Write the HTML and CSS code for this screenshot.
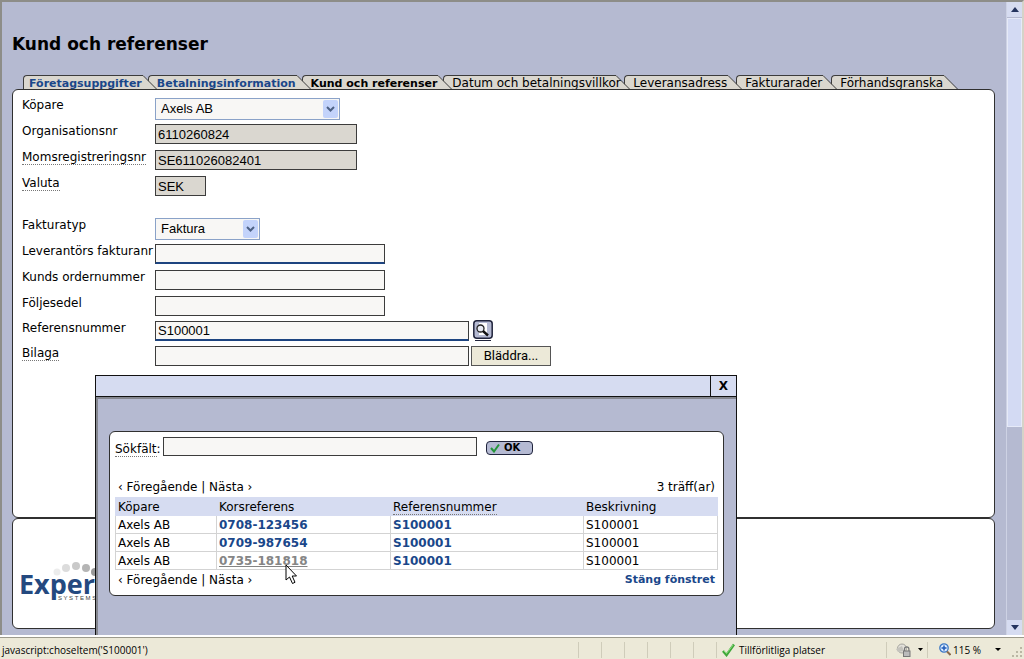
FILE: index.html
```html
<!DOCTYPE html>
<html lang="sv">
<head>
<meta charset="utf-8">
<title>Kund och referenser</title>
<link rel="stylesheet" href="styles.css">
</head>
<body>
<div class="viewport">
  <div class="page">
    <h1 class="title">Kund och referenser</h1>
    <nav>
      <ul class="tabs">
        <li class="tab tab-link"><a href="#"><span>Företagsuppgifter</span></a><svg class="tab-end" width="15" height="15"><path class="fill" d="M0 0H1L15 15H0Z"/><path class="edge" d="M0 .5H1L15 14.5"/></svg></li>
        <li class="tab tab-link"><a href="#"><span>Betalningsinformation</span></a><svg class="tab-end" width="15" height="15"><path class="fill" d="M0 0H1L15 15H0Z"/><path class="edge" d="M0 .5H1L15 14.5"/></svg></li>
        <li class="tab tab-current"><a href="#"><span>Kund och referenser</span></a><svg class="tab-end" width="15" height="15"><path class="fill" d="M0 0H1L15 15H0Z"/><path class="edge" d="M0 .5H1L15 14.5"/></svg></li>
        <li class="tab tab-terms"><a href="#"><span>Datum och betalningsvillkor</span></a><svg class="tab-end" width="15" height="15"><path class="fill" d="M0 0H1L15 15H0Z"/><path class="edge" d="M0 .5H1L15 14.5"/></svg></li>
        <li class="tab"><a href="#"><span>Leveransadress</span></a><svg class="tab-end" width="15" height="15"><path class="fill" d="M0 0H1L15 15H0Z"/><path class="edge" d="M0 .5H1L15 14.5"/></svg></li>
        <li class="tab"><a href="#"><span>Fakturarader</span></a><svg class="tab-end" width="15" height="15"><path class="fill" d="M0 0H1L15 15H0Z"/><path class="edge" d="M0 .5H1L15 14.5"/></svg></li>
        <li class="tab"><a href="#"><span>Förhandsgranska</span></a><svg class="tab-end" width="15" height="15"><path class="fill" d="M0 0H1L15 15H0Z"/><path class="edge" d="M0 .5H1L15 14.5"/></svg></li>
      </ul>
    </nav>

    <main class="panel form-panel">
      <form class="form">
        <div class="row"><label for="buyer">Köpare</label>
          <span class="select-box w-buyer"><select id="buyer"><option>Axels AB</option></select><svg class="arrow" width="15" height="18" viewBox="0 0 15 18"><path d="M4 7L7.500 10.500L11 7"/></svg></span></div>
        <div class="row"><label for="org">Organisationsnr</label><input class="field w-org" id="org" value="6110260824" readonly></div>
        <div class="row"><label for="vat"><span class="hint">Momsregistreringsnr</span></label><input class="field w-org" id="vat" value="SE611026082401" readonly></div>
        <div class="row"><label for="cur"><span class="hint">Valuta</span></label><input class="field w-cur" id="cur" value="SEK" readonly></div>
        <div class="row group"><label for="type">Fakturatyp</label>
          <span class="select-box w-type"><select id="type"><option>Faktura</option></select><svg class="arrow" width="15" height="18" viewBox="0 0 15 18"><path d="M4 7L7.500 10.500L11 7"/></svg></span></div>
        <div class="row"><label for="inv">Leverantörs fakturanr</label><input class="field w-mid required" id="inv"></div>
        <div class="row"><label for="ord">Kunds ordernummer</label><input class="field w-mid" id="ord"></div>
        <div class="row tight"><label for="slip">Följesedel</label><input class="field w-mid" id="slip"></div>
        <div class="row tight"><label for="ref">Referensnummer</label><input class="field w-long required" id="ref" value="S100001">
          <button class="lookup" type="button" aria-label="Sök"><svg width="20" height="21" viewBox="0 0 20 21"><rect x=".8" y=".8" width="18.400" height="17.400" rx="3" fill="#b5bad3" stroke="#20243c" stroke-width="1.500"/><path d="M6 3h8v12H6z" fill="#fff"/><circle cx="7.500" cy="8.500" r="3.500" fill="#e8ebf4" stroke="#222" stroke-width="1.300"/><path d="M10 11L15 15.500" stroke="#111" stroke-width="2.400"/><path d="M2 20.500H18" stroke="#20243c"/></svg></button></div>
        <div class="row"><label for="att"><span class="hint">Bilaga</span></label><input class="field w-long" id="att"><button class="browse" type="button">Bläddra...</button></div>
      </form>
    </main>

    <footer class="panel brand">
      <svg width="130" height="50" viewBox="0 0 130 50" role="img" aria-label="Expert Systems">
        <g><circle cx="36" cy="11" r="3.500" fill="#ececec"/><circle cx="45" cy="7" r="4" fill="#dcdcdc"/><circle cx="55" cy="5" r="4" fill="#c9c9c9"/><circle cx="65" cy="7" r="4" fill="#b5b5b5"/><circle cx="74" cy="11" r="4" fill="#999"/></g>
        <text class="logo-name" x="-2" y="33">Expert</text>
        <text class="logo-sub" x="37" y="39">S Y S T E M S</text>
      </svg>
    </footer>

    <section class="dialog" role="dialog" aria-label="Sök referens">
      <header class="dialog-bar"><button class="close" type="button">X</button></header>
      <div class="dialog-body">
        <div class="panel result-panel">
          <div class="search"><label for="q"><span class="hint">Sökfält</span>:</label><input class="field" id="q">
            <button class="ok" type="button"><svg width="10" height="10" viewBox="0 0 10 10"><path d="M1 5L4 8.500L9 1.500" fill="none" stroke="#24963a" stroke-width="2"/></svg>OK</button></div>
          <div class="pager"><span>‹ Föregående | Nästa ›</span><span>3 träff(ar)</span></div>
          <table class="results">
            <colgroup><col class="c1"><col class="c2"><col class="c3"><col class="c4"></colgroup>
            <thead><tr><th>Köpare</th><th>Korsreferens</th><th><span class="hint">Referensnummer</span></th><th>Beskrivning</th></tr></thead>
            <tbody>
              <tr><td>Axels AB</td><td><a href="#">0708-123456</a></td><td><a href="#">S100001</a></td><td>S100001</td></tr>
              <tr><td>Axels AB</td><td><a href="#">0709-987654</a></td><td><a href="#">S100001</a></td><td>S100001</td></tr>
              <tr><td>Axels AB</td><td><a class="hovered" href="#">0735-181818</a></td><td><a href="#">S100001</a></td><td>S100001</td></tr>
            </tbody>
          </table>
          <div class="pager bottom"><span>‹ Föregående | Nästa ›</span><a href="#">Stäng fönstret</a></div>
        </div>
      </div>
      <svg class="cursor" width="13" height="21" viewBox="0 0 13 21"><path d="M1 1V16L4.500 13L7.500 19.500L10 18.300L7.200 12H11.500Z" fill="#fff" stroke="#000"/></svg>
    </section>
  </div>

  <div class="scroll" aria-hidden="true">
    <span class="scroll-btn"><svg width="8" height="5"><path d="M0 5L4 0L8 5Z"/></svg></span>
    <span class="thumb"></span>
    <span class="scroll-btn down"><svg width="8" height="5"><path d="M0 0H8L4 5Z"/></svg></span>
  </div>
</div>

<div class="status">
  <span class="status-text">javascript:choseItem('S100001')</span>
  <span class="cell"></span><span class="cell"></span><span class="cell"></span><span class="cell"></span><span class="cell"></span><span class="cell"></span>
  <span class="zone"><svg width="13" height="14" viewBox="0 0 13 14"><path d="M1 8L4.500 12L12 1.500" fill="none" stroke="#3fa83a" stroke-width="2.600"/><path d="M1.500 7.500L4.500 10.500L11 2" fill="none" stroke="#8fdc80"/></svg>Tillförlitliga platser</span>
  <span class="privacy"><svg width="15" height="14" viewBox="0 0 15 14"><circle cx="6" cy="5.500" r="4.500" fill="#e3e1da" stroke="#a5a49e"/><path d="M0 6L6 3L8 8L2 9Z" fill="#c4c3bd"/><path d="M8.500 8V6a2.200 2.200 0 0 1 4.400 0V8" fill="none" stroke="#777" stroke-width="1.200"/><rect x="7.500" y="8" width="6.500" height="5.500" fill="#bbb" stroke="#777"/></svg><svg class="drop" width="5" height="3"><path d="M0 0H5L2.500 3Z"/></svg></span>
  <span class="zoom"><svg width="12" height="13" viewBox="0 0 12 13"><circle cx="5" cy="5" r="4.200" fill="#dcebff" stroke="#3c78c4" stroke-width="1.300"/><path d="M5 2.500V7.500M2.500 5H7.500" stroke="#1e5bb8" stroke-width="1.500"/><path d="M8 8.500L11.500 12" stroke="#8a6a4c" stroke-width="2"/></svg><span>115 %</span><svg class="drop" width="6" height="3"><path d="M0 0H6L3 3Z"/></svg></span>
  <svg class="grip" width="12" height="12" fill="#bab7a4"><path d="M8 0h2v2H8zM4 4h2v2H4zM8 4h2v2H8zM0 8h2v2H0zM4 8h2v2H4zM8 8h2v2H8z"/></svg>
</div>
</body>
</html>
```
FILE: styles.css
```css
* { box-sizing: border-box; }
body {
  margin: 0;
  height: 100vh;
  display: flex;
  flex-direction: column;
  overflow: hidden;
  background: #ece9d8;
  color: #000;
  font: 12px/16px "DejaVu Sans", Verdana, sans-serif;
}
button, input, select { font: inherit; color: inherit; margin: 0; }
a { color: inherit; text-decoration: none; }

.viewport {
  flex: 1;
  min-height: 0;
  display: flex;
  overflow: hidden;
  background: #b5bad1;
  border-top: 2px solid #8d8d88;
  border-left: 2px solid #8d8d88;
  border-right: 2px solid #d5d3c8;
}
.page {
  position: relative;
  flex: 1;
  display: flex;
  flex-direction: column;
  padding: 32px 11px 6px 10px;
}
.title { margin: 0 0 20px; font-size: 17px; line-height: 21px; }

.tabs {
  display: flex;
  list-style: none;
  margin: 0;
  padding: 0 0 0 11px;
  height: 14px;
  overflow: hidden;
}
.tab { display: flex; }
.tab + .tab { margin-left: -6px; }
.tab-link + .tab, .tab-current + .tab { margin-left: -9px; }
.tab a {
  background: #dad7cf;
  border: solid #3c3c3c;
  border-width: 1px 0 0 1px;
  border-top-left-radius: 4px;
  padding-left: 8px;
  line-height: 15px;
  height: 15px;
  white-space: nowrap;
}
.tab:first-child a { padding-left: 5px; }
.tab-terms a { width: 172px; }
.tab a span { position: relative; z-index: 2; }
.tab-end { position: relative; z-index: 1; }
.tab-end .fill { fill: #dad7cf; }
.tab-end .edge { fill: none; stroke: #3c3c3c; }
.tab-link, .tab-current { font-weight: bold; font-size: 11px; }
.tab-link a { color: #1a478a; }

.panel { background: #fff; border: 1px solid #303030; border-radius: 6px; }
.form-panel { flex: 1; padding: 7px 9px; }
.brand { height: 111px; padding: 42px 8px 0; }
.logo-name { font: bold 27px "Open Sans", sans-serif; fill: #24497f; }
.logo-sub { font: 6px "Liberation Sans", sans-serif; fill: #444; }

.row { display: flex; align-items: flex-start; height: 26px; }
.row.group { margin-top: 16px; }
.row.tight { height: 25px; }
.row label { width: 133px; white-space: nowrap; }
.hint { border-bottom: 1px dotted #777; }
.field {
  height: 20px;
  padding: 0 2px;
  border: 1px solid #3c3c3c;
  border-radius: 0;
  background: #f8f7f5;
  font: 13px/18px "Liberation Sans", Arial, sans-serif;
}
.row .field { margin-top: 1px; }
.field:read-only { background: #dad7d0; }
.required { border-bottom: 2px solid #1d4480; }
.w-org { width: 202px; }
.w-cur { width: 51px; }
.w-mid { width: 230px; }
.w-long { width: 314px; }
.w-buyer { width: 185px; }
.w-type { width: 105px; }
.select-box {
  display: flex;
  height: 22px;
  padding: 1px;
  margin-top: 1px;
  background: #f8f7f5;
  border: 1px solid #8aa2c8;
}
.select-box select {
  flex: 1;
  appearance: none;
  border: 0;
  padding: 0 4px;
  background: transparent;
  font: 13px/18px "Liberation Sans", Arial, sans-serif;
}
.arrow { background: #c3d3fb; border-radius: 2px; }
.arrow path { fill: none; stroke: #4d6185; stroke-width: 2; }
.lookup { border: 0; padding: 0; margin-left: 4px; background: none; height: 21px; }
.browse {
  width: 80px;
  height: 20px;
  margin: 1px 0 0 2px;
  padding: 0;
  border: 1px solid #555;
  background: #ece9d8;
  font: 13px/16px Roboto, sans-serif;
}

.dialog {
  position: absolute;
  left: 93px;
  top: 373px;
  bottom: 0;
  width: 642px;
  display: flex;
  flex-direction: column;
  border: 1px solid #111;
  border-bottom: 0;
  background: #b5bad1;
}
.dialog-bar {
  display: flex;
  justify-content: flex-end;
  height: 21px;
  background: #d6dcf1;
  border-bottom: 1px solid #111;
}
.close {
  width: 26px;
  padding: 0;
  border: 0;
  border-left: 1px solid #111;
  background: none;
  font-size: 12px;
  font-weight: bold;
}
.dialog-body {
  flex: 1;
  padding: 32px 12px 0 11px;
  border-top: 2px solid #85878f;
  border-left: 2px solid #85878f;
}
.result-panel { height: 165px; padding: 5px 5px 0; }
.search { display: flex; align-items: flex-start; }
.search label { line-height: 24px; width: 48px; white-space: nowrap; }
.search .hint { display: inline-block; line-height: 14px; }
.search .field { width: 314px; height: 19px; }
.ok {
  display: flex;
  align-items: center;
  gap: 4px;
  width: 47px;
  height: 14px;
  margin: 4px 0 0 9px;
  padding: 0 3px;
  border: 1px solid #20243c;
  border-radius: 4px;
  background: #b5bad3;
  font-size: 10px;
  font-weight: bold;
  line-height: 12px;
}
.pager { display: flex; justify-content: space-between; padding: 0 3px; margin-top: 17px; height: 19px; line-height: 18px; }
.pager.bottom { margin-top: 1px; }
.pager a, .results a { color: #1a478a; font-weight: bold; }
.pager a { font-size: 11px; }
.results { width: 100%; table-layout: fixed; border-collapse: collapse; }
.results th, .results td {
  height: 18px;
  padding: 1px 2px 0;
  border: 1px solid #d3d3d3;
  text-align: left;
  font-weight: normal;
  line-height: 16px;
}
.results th { background: #d6dcf1; border-color: #d6dcf1; }
.results .hovered { color: #858585; text-decoration: underline; }
.c1 { width: 101px; }
.c2 { width: 174px; }
.c3 { width: 193px; }
.cursor { position: absolute; left: 189px; top: 188px; }

.scroll { width: 16px; display: flex; flex-direction: column; border-left: 1px solid #cdd2e4; }
.scroll-btn { display: flex; align-items: center; justify-content: center; height: 15px; background: #d6dcf1; fill: #26355f; }
.scroll-btn.down { margin-top: auto; }
.thumb { height: 409px; margin-top: 1px; background: #d3daf3; border: 1px solid #e6eaf8; }

.status {
  display: flex;
  align-items: center;
  height: 24px;
  padding-top: 3px;
  border-top: 2px solid #fff;
  box-shadow: inset 0 1px #9c9a8c;
  font: 10px/14px "Open Sans", Tahoma, sans-serif;
}
.status-text { flex: 1; padding-left: 2px; }
.cell { width: 23px; height: 16px; border-left: 1px solid #cfccba; }
.zone, .privacy, .zoom { display: flex; align-items: center; height: 16px; border-left: 1px solid #cfccba; }
.zone { width: 170px; padding-left: 5px; gap: 4px; }
.privacy { width: 41px; gap: 7px; padding-left: 9px; }
.zoom { width: 85px; padding-left: 11px; gap: 2px; }
.zoom .drop { margin-left: 12px; }
.grip { align-self: flex-end; }
```
